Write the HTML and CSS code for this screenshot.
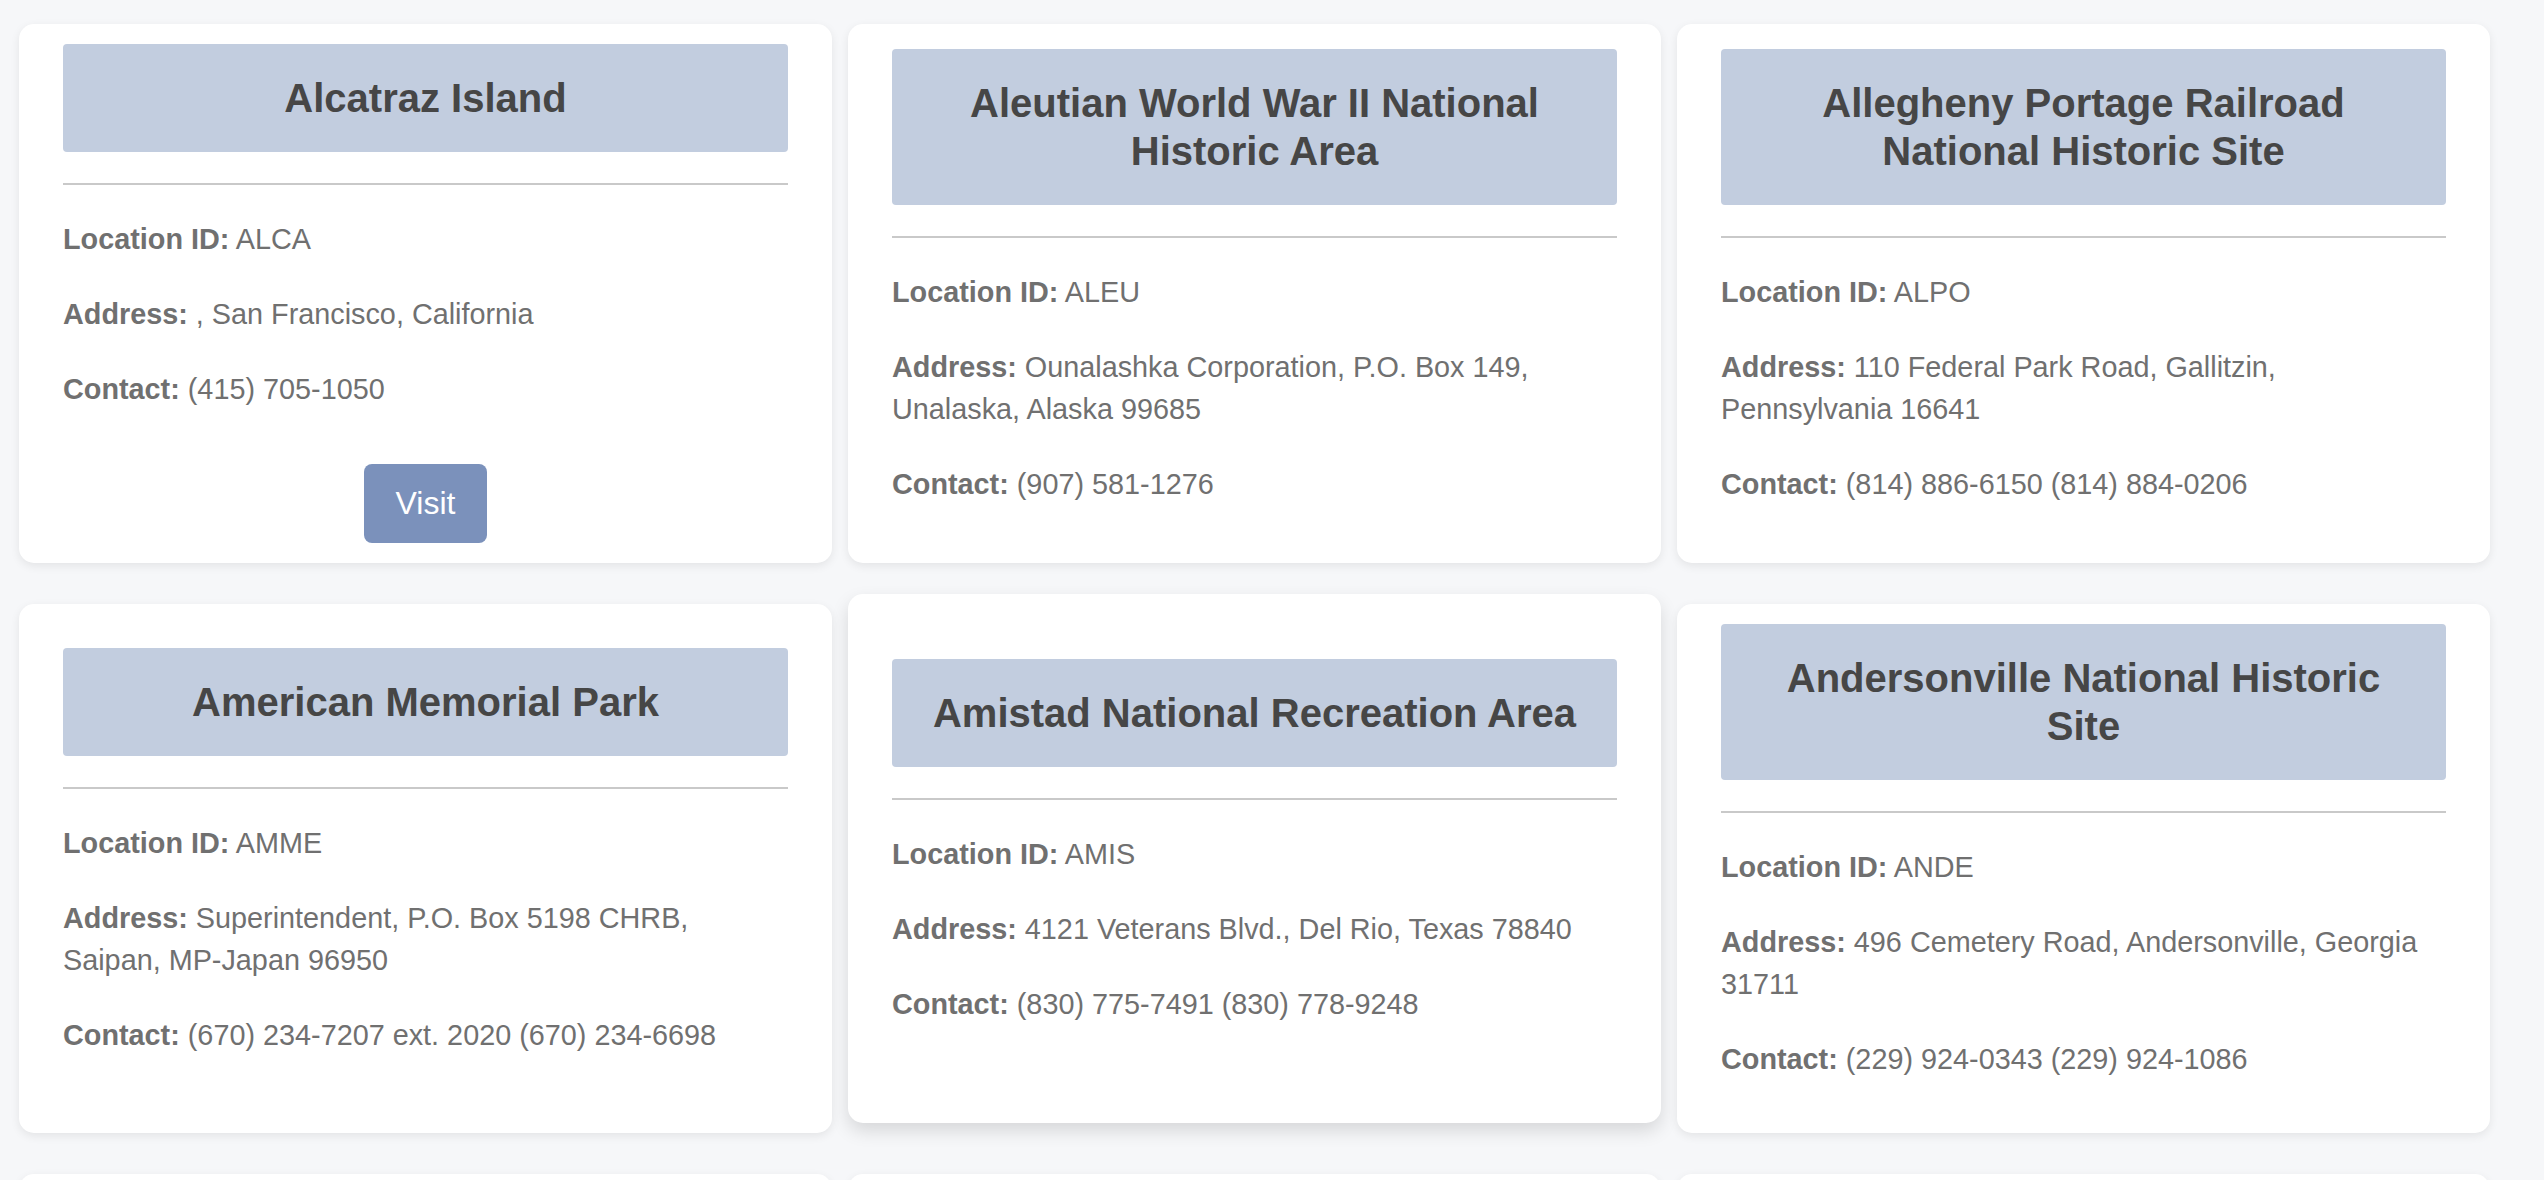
FILE: index.html
```html
<!DOCTYPE html>
<html lang="en">
<head>
<meta charset="utf-8">
<title>National Park Locations</title>
<link rel="stylesheet" href="styles.css">
</head>
<body>
<main class="grid">
  <article class="card">
    <div class="card-body">
      <h2 class="title">Alcatraz Island</h2>
      <hr class="rule">
      <p class="field"><b>Location ID:</b> ALCA</p>
      <p class="field"><b>Address:</b> , San Francisco, California</p>
      <p class="field"><b>Contact:</b> (415) 705-1050</p>
      <div class="actions"><button class="visit" type="button">Visit</button></div>
    </div>
  </article>
  <article class="card">
    <div class="card-body">
      <h2 class="title">Aleutian World War II National Historic Area</h2>
      <hr class="rule">
      <p class="field"><b>Location ID:</b> ALEU</p>
      <p class="field"><b>Address:</b> Ounalashka Corporation, P.O. Box 149, Unalaska, Alaska 99685</p>
      <p class="field"><b>Contact:</b> (907) 581-1276</p>
    </div>
  </article>
  <article class="card">
    <div class="card-body">
      <h2 class="title">Allegheny Portage Railroad National Historic Site</h2>
      <hr class="rule">
      <p class="field"><b>Location ID:</b> ALPO</p>
      <p class="field"><b>Address:</b> 110 Federal Park Road, Gallitzin, Pennsylvania 16641</p>
      <p class="field"><b>Contact:</b> (814) 886-6150 (814) 884-0206</p>
    </div>
  </article>
  <article class="card">
    <div class="card-body">
      <h2 class="title">American Memorial Park</h2>
      <hr class="rule">
      <p class="field"><b>Location ID:</b> AMME</p>
      <p class="field"><b>Address:</b> Superintendent, P.O. Box 5198 CHRB, Saipan, MP-Japan 96950</p>
      <p class="field"><b>Contact:</b> (670) 234-7207 ext. 2020 (670) 234-6698</p>
    </div>
  </article>
  <article class="card raised">
    <div class="card-body">
      <h2 class="title">Amistad National Recreation Area</h2>
      <hr class="rule">
      <p class="field"><b>Location ID:</b> AMIS</p>
      <p class="field"><b>Address:</b> 4121 Veterans Blvd., Del Rio, Texas 78840</p>
      <p class="field"><b>Contact:</b> (830) 775-7491 (830) 778-9248</p>
    </div>
  </article>
  <article class="card">
    <div class="card-body">
      <h2 class="title">Andersonville National Historic Site</h2>
      <hr class="rule">
      <p class="field"><b>Location ID:</b> ANDE</p>
      <p class="field"><b>Address:</b> 496 Cemetery Road, Andersonville, Georgia 31711</p>
      <p class="field"><b>Contact:</b> (229) 924-0343 (229) 924-1086</p>
    </div>
  </article>
  <article class="card">
    <div class="card-body">
      <h2 class="title">Andrew Johnson National Historic Site</h2>
      <hr class="rule">
      <p class="field"><b>Location ID:</b> ANJO</p>
      <p class="field"><b>Address:</b> 121 Monument Avenue, Greeneville, Tennessee 37743</p>
      <p class="field"><b>Contact:</b> (423) 638-3551</p>
    </div>
  </article>
  <article class="card">
    <div class="card-body">
      <h2 class="title">Aniakchak National Monument &amp; Preserve</h2>
      <hr class="rule">
      <p class="field"><b>Location ID:</b> ANIA</p>
      <p class="field"><b>Address:</b> P.O. Box 245, King Salmon, Alaska 99613</p>
      <p class="field"><b>Contact:</b> (907) 246-3305</p>
    </div>
  </article>
  <article class="card">
    <div class="card-body">
      <h2 class="title">Antietam National Battlefield</h2>
      <hr class="rule">
      <p class="field"><b>Location ID:</b> ANTI</p>
      <p class="field"><b>Address:</b> P.O. Box 158, Sharpsburg, Maryland 21782</p>
      <p class="field"><b>Contact:</b> (301) 432-5124</p>
    </div>
  </article>
</main>
</body>
</html>
```

FILE: styles.css
```css
html, body {
  margin: 0;
  padding: 0;
  background: #f6f7f9;
}

body {
  font-family: "Liberation Sans", Arial, Helvetica, sans-serif;
  color: #6b6b6b;
}

.grid {
  display: grid;
  grid-template-columns: repeat(3, 813px);
  column-gap: 16px;
  row-gap: 41px;
  padding: 24px 0 0 19px;
}

.card {
  background: #ffffff;
  border-radius: 15px;
  box-shadow: 0 3px 10px rgba(0, 0, 0, 0.08);
  padding: 20px 44px;
  display: flex;
  flex-direction: column;
  justify-content: center;
}

.card.raised {
  transform: translateY(-10px);
  box-shadow: 0 8px 18px rgba(0, 0, 0, 0.13);
}

.title {
  margin: 0;
  background: #c2cddf;
  border-radius: 4px;
  padding: 30px;
  font-size: 40px;
  line-height: 48px;
  font-weight: bold;
  color: #464646;
  text-align: center;
}

.rule {
  border: 0;
  height: 2px;
  background: #c9c9c9;
  margin: 31px 0 33px;
}

.field {
  margin: 0 0 33px;
  font-size: 28.8px;
  line-height: 42px;
  color: #707070;
}

.field b {
  font-weight: bold;
}

.actions {
  text-align: center;
  padding-top: 21px;
}

.visit {
  font-family: "Liberation Sans", Arial, Helvetica, sans-serif;
  font-size: 32px;
  line-height: 37px;
  color: #ffffff;
  background: #7b91bb;
  border: 0;
  border-radius: 8px;
  padding: 21px 32px;
}
```
